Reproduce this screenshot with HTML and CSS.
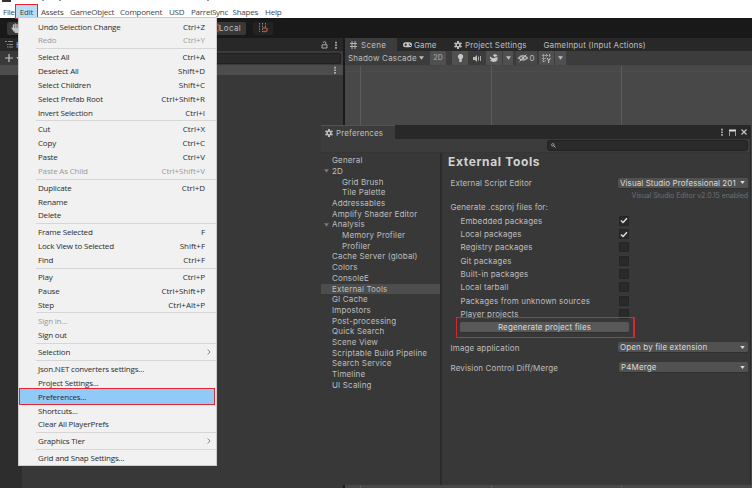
FILE: index.html
```
<!DOCTYPE html>
<html lang="en">
<head>
<meta charset="utf-8">
<title>Unity Preferences</title>
<link rel="stylesheet" href="styles.css">
</head>
<body>
<svg class="defs" width="0" height="0">
  <symbol id="gear" viewBox="0 0 16 16"><path fill="none" stroke="currentColor" stroke-width="3.4" d="M8 3.7 11.7 5.8V10.2L8 12.3 4.3 10.2V5.8Z"/><path stroke="currentColor" stroke-width="4" d="M8 0V3M8 13V16M1 4 3.6 5.5M12.4 10.5 15 12M1 12 3.6 10.5M12.4 5.5 15 4"/></symbol>
  <symbol id="dots" viewBox="0 0 4 10"><path fill="currentColor" d="M1 1h2v2H1zM1 4.300h2v2H1zM1 7.600h2v2H1z"/></symbol>
  <symbol id="down" viewBox="0 0 6 4"><path fill="currentColor" d="M0 0H6L3 4Z"/></symbol>
</svg>
<div class="app">
  <header class="menubar">
    <i class="crumb c1"></i><i class="crumb c2"></i><i class="crumb c3"></i><i class="crumb c4"></i>
    <span class="m-file">File</span><span class="m-edit">Edit</span><span class="m-assets">Assets</span><span class="m-go">GameObject</span><span class="m-comp">Component</span><span class="m-usd">USD</span><span class="m-ps">ParrelSync</span><span class="m-shapes">Shapes</span><span class="m-help">Help</span>
  </header>
  <div class="toolbar">
    <div class="tool hand"><svg width="9" height="10" viewBox="0 0 9 10"><path fill="none" stroke="#c4c4c4" stroke-width="1.300" stroke-linecap="round" d="M2.500 6V2M4.200 5V1M6 5V1.500M7.700 6V3M1 5l2 3"/><path fill="#c4c4c4" d="M2 5h6.300v2L7 10H4Z"/></svg></div>
    <div class="tool local"><svg width="5" height="9" viewBox="0 0 5 9"><path d="M0 1h3v5M0 7h3" fill="none" stroke="#c9573e" stroke-width="1.200"/></svg><span>Local</span></div>
    <div class="tool snap"><svg width="10" height="10" viewBox="0 0 10 10"><path d="M1.500 0v9M4.500 0v9M7.500 0v4" stroke="#8a8a8a" stroke-dasharray="1.500 1.200"/><path d="M5 5h2.500a1.700 1.700 0 010 3.500H5" fill="none" stroke="#b54f3a" stroke-width="1.500"/></svg></div>
  </div>
  <main class="work">
    <section class="hier">
      <div class="tabs"><svg class="list" width="8" height="7" viewBox="0 0 8 7"><path d="M0 .5h2M3 .5h5M2 3.500h1.500M4 3.500h4M2 6h1.500M4 6h4" stroke="#888" fill="none"/></svg><span class="h-label">H</span><svg class="lock" width="7" height="8" viewBox="0 0 7 8"><path d="M1 3.800h5V7H1zM4.800 3.500V1.800Q4.800.7 3.500.7 2.200.7 2.200 1.800" fill="none" stroke="#aaa"/></svg><svg class="d" width="4" height="8"><use href="#dots"/></svg></div>
      <div class="find"><svg class="plus" width="8" height="8" viewBox="0 0 8 8"><path d="M4 0v8M0 4h8" stroke="#c4c4c4" stroke-width="1.200"/></svg><svg class="caret" width="5" height="3"><use href="#down"/></svg><div class="field"></div></div>
      <div class="scene-row"><svg width="4" height="8"><use href="#dots"/></svg></div>
      <div class="hier-body"><div class="gutter"></div></div>
    </section>
    <section class="scene">
      <div class="tabs">
        <div class="tab on"><svg width="7" height="8" viewBox="0 0 7 8"><path d="M2 0v8M5 0v8M0 2.500h7M0 5.500h7" stroke="#b4b4b4"/></svg><span>Scene</span></div>
        <div class="tab game"><svg width="9" height="6" viewBox="0 0 10 6"><rect width="10" height="5.600" rx="2.800" fill="#c8c8c8"/><path d="M1.500 2.800h3M3 1.300v3" stroke="#282828"/><circle cx="7" cy="2" r=".7"/><circle cx="8" cy="3.500" r=".7"/></svg><span>Game</span></div>
        <div class="tab proj"><svg width="8" height="8"><use href="#gear"/></svg><span>Project Settings</span></div>
        <div class="tab input"><span>GameInput (Input Actions)</span></div>
      </div>
      <div class="tools">
        <div class="shade"><span>Shadow Cascade</span><svg width="5" height="4"><use href="#down"/></svg></div>
        <div class="t two">2D</div>
        <div class="t bulb"><svg width="7" height="8" viewBox="0 0 7 8"><circle cx="3.500" cy="2.600" r="2.600" fill="#c8c8c8"/><path d="M2.300 4h2.400v4H2.300z" fill="#c8c8c8"/></svg></div>
        <div class="t off"><svg width="9" height="7" viewBox="0 0 9 7"><path d="M0 2h2l2-2v7L2 5H0z" fill="#bbb"/><path d="M5.500 1.500v4M7.500 1v5" stroke="#aaa"/></svg></div>
        <div class="t fx"><svg width="8" height="8" viewBox="0 0 8 8"><path d="M0 2.500 3 4.200 7.500 3v1.500L6.500 5.500H8L6 7.500 3 8 0 6.500 1.500 5.500 0 4.500ZM3 1.500 4.500 0 6.500.8 7.500 2 4.500 3Z" fill="#c8c8c8"/></svg></div>
        <div class="t dd"><svg width="5" height="4"><use href="#down"/></svg></div>
        <div class="t eye"><svg width="10" height="8" viewBox="0 0 10 8"><path d="M.5 4Q5-.5 9.500 4 5 8 .5 4Z" fill="none" stroke="#b0b0b0" stroke-width="1.300"/><circle cx="5" cy="4" r="1.500" fill="#b0b0b0"/><path d="M1.500 7.500 8.500.5" stroke="#c0c0c0"/></svg><span>0</span></div>
        <div class="t grid"><svg width="9" height="9" viewBox="0 0 9 9"><path d="M0 1.500h9M0 4.500h4M0 7h4M1.500 0v8M4.500 0v3M7.500 0v3" stroke="#aaa" stroke-dasharray="1.500 .8"/><path d="M5 4l1.700 2.500L8.500 4M6.700 6.500V9" fill="none" stroke="#d0d0d0"/></svg></div>
        <div class="t dd last"><svg width="5" height="4"><use href="#down"/></svg></div>
      </div>
      <div class="view"><i></i><i></i><i></i></div>
    </section>
  </main>

  <nav class="menu">
    <div class="mi"><span>Undo Selection Change</span><kbd>Ctrl+Z</kbd></div>
    <div class="mi dim"><span>Redo</span><kbd>Ctrl+Y</kbd></div><hr>
    <div class="mi"><span>Select All</span><kbd>Ctrl+A</kbd></div>
    <div class="mi"><span>Deselect All</span><kbd>Shift+D</kbd></div>
    <div class="mi"><span>Select Children</span><kbd>Shift+C</kbd></div>
    <div class="mi"><span>Select Prefab Root</span><kbd>Ctrl+Shift+R</kbd></div>
    <div class="mi"><span>Invert Selection</span><kbd>Ctrl+I</kbd></div><hr>
    <div class="mi"><span>Cut</span><kbd>Ctrl+X</kbd></div>
    <div class="mi"><span>Copy</span><kbd>Ctrl+C</kbd></div>
    <div class="mi"><span>Paste</span><kbd>Ctrl+V</kbd></div>
    <div class="mi dim"><span>Paste As Child</span><kbd>Ctrl+Shift+V</kbd></div><hr>
    <div class="mi"><span>Duplicate</span><kbd>Ctrl+D</kbd></div>
    <div class="mi"><span>Rename</span></div>
    <div class="mi"><span>Delete</span></div><hr>
    <div class="mi"><span>Frame Selected</span><kbd>F</kbd></div>
    <div class="mi"><span>Lock View to Selected</span><kbd>Shift+F</kbd></div>
    <div class="mi"><span>Find</span><kbd>Ctrl+F</kbd></div><hr>
    <div class="mi"><span>Play</span><kbd>Ctrl+P</kbd></div>
    <div class="mi"><span>Pause</span><kbd>Ctrl+Shift+P</kbd></div>
    <div class="mi"><span>Step</span><kbd>Ctrl+Alt+P</kbd></div><hr>
    <div class="mi dim"><span>Sign in...</span></div>
    <div class="mi"><span>Sign out</span></div><hr>
    <div class="mi"><span>Selection</span><svg class="chev" width="4" height="6" viewBox="0 0 4 6"><path d="M.7.5 3 3 .7 5.500" fill="none" stroke="#777" stroke-width=".9"/></svg></div><hr>
    <div class="mi"><span>Json.NET converters settings...</span></div>
    <div class="mi"><span>Project Settings...</span></div>
    <div class="mi hot"><span>Preferences...</span></div>
    <div class="mi"><span>Shortcuts...</span></div>
    <div class="mi"><span>Clear All PlayerPrefs</span></div><hr>
    <div class="mi"><span>Graphics Tier</span><svg class="chev" width="4" height="6" viewBox="0 0 4 6"><path d="M.7.5 3 3 .7 5.500" fill="none" stroke="#777" stroke-width=".9"/></svg></div><hr>
    <div class="mi"><span>Grid and Snap Settings...</span></div>
  </nav>

  <section class="prefs">
    <div class="ptabs">
      <div class="ptab"><svg width="8" height="8"><use href="#gear"/></svg><span>Preferences</span></div>
      <div class="wbtns"><svg width="4" height="8"><use href="#dots"/></svg><svg width="7" height="7" viewBox="0 0 7 7"><path d="M0 1.500h7" stroke="#ddd" stroke-width="2"/><path d="M.5 2v5M6.500 2v5" stroke="#999"/></svg><svg width="6" height="6" viewBox="0 0 6 6"><path d="M.5.5l5 5M5.500.5l-5 5" stroke="#c4c4c4" stroke-width="1.200"/></svg></div>
    </div>
    <div class="psearch"><div class="pfield"><svg width="5" height="5" viewBox="0 0 6 6"><circle cx="2.200" cy="2.200" r="1.500" fill="none" stroke="#aaa"/><path d="M3.300 3.300 5.500 5.300" stroke="#aaa" stroke-width="1.200"/></svg></div></div>
    <div class="pmain">
      <div class="tree">
        <div>General</div>
        <div class="open"><svg width="5" height="4"><use href="#down"/></svg>2D</div>
        <div class="sub">Grid Brush</div>
        <div class="sub">Tile Palette</div>
        <div>Addressables</div>
        <div>Amplify Shader Editor</div>
        <div class="open"><svg width="5" height="4"><use href="#down"/></svg>Analysis</div>
        <div class="sub">Memory Profiler</div>
        <div class="sub">Profiler</div>
        <div>Cache Server (global)</div>
        <div>Colors</div>
        <div>ConsoleE</div>
        <div class="sel">External Tools</div>
        <div>GI Cache</div>
        <div>Impostors</div>
        <div>Post-processing</div>
        <div>Quick Search</div>
        <div>Scene View</div>
        <div>Scriptable Build Pipeline</div>
        <div>Search Service</div>
        <div>Timeline</div>
        <div>UI Scaling</div>
      </div>
      <div class="detail">
        <h1>External Tools</h1>
        <div class="row first"><label>External Script Editor</label><div class="drop"><span>Visual Studio Professional 201</span><svg width="5" height="3"><use href="#down"/></svg></div></div>
        <div class="note">Visual Studio Editor v2.0.15 enabled</div>
        <div class="gen">Generate .csproj files for:</div>
        <div class="opt"><label>Embedded packages</label><b class="on"><svg width="8" height="7" viewBox="0 0 8 7"><path d="M1 3.500 3 5.500 7 1.200" fill="none" stroke="#ddd" stroke-width="1.500"/></svg></b></div>
        <div class="opt"><label>Local packages</label><b class="on"><svg width="8" height="7" viewBox="0 0 8 7"><path d="M1 3.500 3 5.500 7 1.200" fill="none" stroke="#ddd" stroke-width="1.500"/></svg></b></div>
        <div class="opt"><label>Registry packages</label><b></b></div>
        <div class="opt"><label>Git packages</label><b></b></div>
        <div class="opt"><label>Built-in packages</label><b></b></div>
        <div class="opt"><label>Local tarball</label><b></b></div>
        <div class="opt"><label>Packages from unknown sources</label><b></b></div>
        <div class="opt"><label>Player projects</label><b></b></div>
        <div class="regen"><div class="btn">Regenerate project files</div></div>
        <div class="row img"><label>Image application</label><div class="drop"><span>Open by file extension</span><svg width="5" height="3"><use href="#down"/></svg></div></div>
        <div class="row rev"><label>Revision Control Diff/Merge</label><div class="drop p4"><span>P4Merge</span><svg width="5" height="3"><use href="#down"/></svg></div></div>
      </div>
    </div>
  </section>
</div>
</body>
</html>
```
FILE: styles.css
```
* { box-sizing: border-box; }
body { margin: 0; width: 752px; height: 488px; overflow: hidden; background: #383838; }
.defs { position: absolute; }
svg { display: block; flex: none; overflow: visible; }
.app { position: relative; width: 752px; height: 488px; display: flex; flex-direction: column; overflow: hidden; color: #bebebe; font: 8px/10px Inter, "Liberation Sans", sans-serif; letter-spacing: .13px; white-space: nowrap; }

.menubar { position: relative; height: 18px; flex: none; background: #fff; display: flex; padding: 5px 0 0 3px; color: #444; font: 8px/13px "Open Sans", "Noto Sans", sans-serif; letter-spacing: -.23px; }
.menubar span { flex: none; height: 13px; }
.m-file { width: 13px; overflow: hidden; }
.menubar .m-edit { width: 23px; height: 15px; margin: -1px 3px 0 -1px; border: 1.500px solid #e8262c; background: #bcdcf4; text-align: center; line-height: 13px; }
.m-assets { width: 29px; }
.m-go { width: 50px; }
.m-comp { width: 49px; }
.m-usd { width: 22px; }
.m-ps { width: 41.500px; }
.m-shapes { width: 32.500px; }
.crumb { position: absolute; top: 0; height: 1px; background: #999; }
.c1 { left: 2px; width: 9px; height: 2px; background: #333; }
.c2 { left: 42px; width: 2px; }
.c3 { left: 59px; width: 2px; }
.c4 { left: 207px; width: 2px; }

.toolbar { height: 20px; flex: none; background: #191919; display: flex; align-items: center; padding-left: 7px; }
.tool { height: 13px; border-radius: 2px; background: #383838; display: flex; align-items: center; }
.hand { width: 60px; padding-left: 4px; }
.local { width: 40px; margin-left: 139px; padding-left: 10px; gap: 0; }
.local span { margin-left: -2px; letter-spacing: .35px; }
.snap { width: 20px; margin-left: 7px; background: #222; justify-content: center; }

.work { flex: 1; display: flex; background: #1b1b1b; }
.hier { width: 343px; display: flex; flex-direction: column; background: #383838; }
.tabs { height: 13px; flex: none; display: flex; align-items: center; background: #282828; }
.hier .tabs { padding: 0 5px; }
.h-label { margin-left: 3px; }
.lock { margin-left: auto; margin-right: 6px; }
.find { height: 14px; flex: none; display: flex; align-items: center; background: #3a3a3a; padding: 0 2px 0 5px; }
.caret { margin-left: 3px; }
.field { flex: 1; margin-left: 8px; height: 11px; border: 1px solid #202020; border-radius: 2px; background: #2a2a2a; }
.scene-row { height: 10px; flex: none; display: flex; justify-content: flex-end; align-items: center; padding-right: 6px; background: #4d4d4d; }
.hier-body { flex: 1; display: flex; }
.gutter { width: 22px; background: #2d2d2d; }

.scene { width: 407px; margin-left: 2px; display: flex; flex-direction: column; background: #484848; }
.tab { height: 13px; display: flex; align-items: center; gap: 4px; }
.tab.on { width: 52px; padding-left: 5px; background: #3c3c3c; letter-spacing: .3px; }
.game { width: 51px; margin-left: 6px; gap: 2px; }
.proj { width: 85px; gap: 3px; }
.input { margin-left: 4.500px; }
.tools { height: 14px; flex: none; display: flex; align-items: stretch; background: #3c3c3c; }
.shade { width: 85px; padding-left: 3px; display: flex; align-items: center; gap: 2px; letter-spacing: .2px; }
.t { height: 14px; display: flex; align-items: center; justify-content: center; background: #505050; }
.two { width: 16px; font-weight: 600; font-size: 7px; letter-spacing: 0; color: #999; }
.bulb { width: 16px; margin-left: 6px; }
.off { width: 17px; margin-left: 1px; background: #3c3c3c; }
.fx { width: 16px; }
.dd { width: 10px; margin-left: 1px; }
.eye { width: 21px; margin-left: 3px; gap: 1px; background: #484848; }
.grid { width: 15px; margin-left: 2px; }
.last { width: 11px; }
.view { flex: 1; display: flex; border-top: 1px solid #454545; padding-left: 15px; gap: 130px; background: linear-gradient(#484848 5px, #4d4d4d 5px, #4d4d4d 6px, #484848 6px); }
.view i { width: 1px; background: #5c5c5c; margin-right: -1px; }
.view i:first-child { margin-right: 0; }

.menu { position: absolute; left: 18px; top: 17px; width: 199px; height: 449px; padding-top: 1.600px; background: #f1f1f1; border: 1px solid #ccc; color: #2c2c2c; font: 8px/13.800px "Open Sans", "Noto Sans", sans-serif; letter-spacing: -.19px; }
.mi { height: 13.800px; display: flex; align-items: center; justify-content: space-between; padding: 0 11px 0 19px; }
.mi kbd { font: inherit; letter-spacing: -.04px; }
.dim { color: #999; }
.menu hr { height: 1px; margin: 1.080px 0 1.080px 17px; border: 0; background: #d6d6d6; }
.chev { margin-right: -6px; }
.hot { height: 17px; margin: -1.600px 1px -1.600px 0; border: 1.500px solid #e3262f; background: #91c9f7; border-left-width: 1px; padding-left: 18px; }

.prefs { position: absolute; left: 321px; top: 125px; width: 430px; height: 360px; display: flex; flex-direction: column; background: #383838; border-right: 1px solid #2a2a2a; }
.ptabs { height: 14px; flex: none; display: flex; justify-content: space-between; background: #282828; }
.ptab { width: 74px; height: 14px; display: flex; align-items: center; gap: 3px; padding-left: 4px; background: #3c3c3c; border-top: 1px solid #2c5d87; }
.wbtns { display: flex; align-items: center; gap: 5px; padding-right: 3px; }
.psearch { height: 14px; flex: none; display: flex; justify-content: flex-end; align-items: center; padding-right: 2px; background: #3c3c3c; border-bottom: 1px solid #353535; }
.pfield { width: 201px; height: 11px; display: flex; align-items: center; padding-left: 3px; background: #2a2a2a; border: 1px solid #212121; border-radius: 3px; }
.pmain { flex: 1; display: flex; }
.tree { width: 121px; padding-top: 2.300px; border-right: 2px solid #2b2b2b; letter-spacing: .15px; }
.tree div { height: 10.690px; line-height: 10.690px; padding-left: 11px; }
.tree .open { display: flex; align-items: center; padding-left: 3px; gap: 3px; }
.open svg { color: #777; }
.tree .sub { padding-left: 21px; }
.tree .sel { background: #4d4d4d; }
.detail { flex: 1; padding: 0 2px 0 6px; }
h1 { margin: 1px 0 0; height: 16px; font: 700 12px/16px Inter, sans-serif; letter-spacing: .65px; color: #d2d2d2; }
.row { height: 12px; display: flex; align-items: center; justify-content: space-between; padding-left: 2.500px; }
.first { margin-top: 7px; letter-spacing: .08px; }
.drop { width: 130px; height: 11px; display: flex; align-items: center; justify-content: space-between; padding: 0 3px 0 2px; border-radius: 2px; background: #515151; border-bottom: 1px solid #303030; color: #dcdcdc; }
.p4 { width: 129px; }
.note { margin-top: 2px; height: 10px; text-align: right; font-size: 7px; line-height: 10px; letter-spacing: -.03px; color: #6f6f6f; }
.gen { height: 12px; padding-left: 2.500px; line-height: 12px; letter-spacing: .06px; margin-bottom: 1px; }
.opt { height: 13.350px; display: flex; align-items: center; padding-left: 12.500px; }
.opt label { width: 158px; }
.opt b { width: 10px; height: 10px; display: flex; align-items: center; justify-content: center; background: #2a2a2a; border: 1px solid #242424; border-radius: 1px; }
.regen { position: relative; width: 179px; height: 21px; margin: -4px 0 0 8px; padding: 4px 4px 0 3px; border: 1.500px solid #d6262e; border-width: 1px 2px 1px 1px; }
.btn { height: 11.500px; background: #585858; border-radius: 2px; border-bottom: 1px solid #303030; text-align: center; color: #dcdcdc; }
.img { margin-top: 4px; }
.rev { margin-top: 8px; }
```
